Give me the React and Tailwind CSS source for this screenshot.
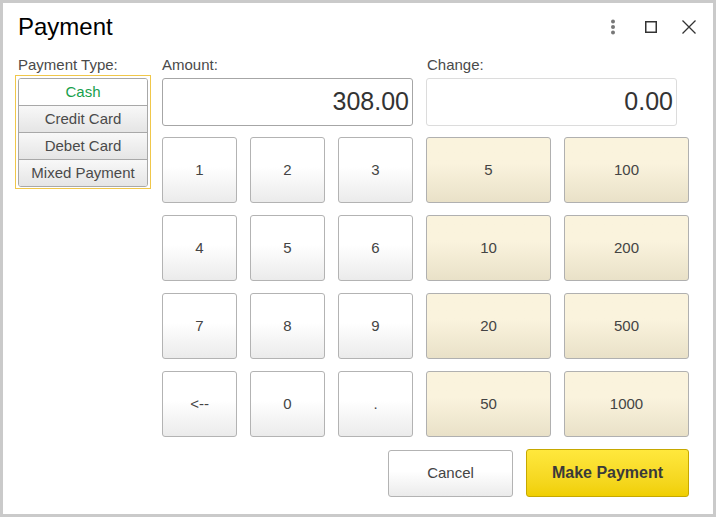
import React from 'react';

const digits = ['1', '2', '3', '4', '5', '6', '7', '8', '9', '<--', '0', '.'];
const bills = ['5', '100', '10', '200', '20', '500', '50', '1000'];
const paymentTypes = ['Cash', 'Credit Card', 'Debet Card', 'Mixed Payment'];

const KeyButton = ({ label }) => (
  <button className="h-[66px] rounded-[3px] border border-[#b3b3b3] bg-linear-to-b from-white from-45% to-[#ebebeb] text-[15px] text-[#444]">
    {label}
  </button>
);

const BillButton = ({ label }) => (
  <button className="h-[66px] rounded-[3px] border border-[#b0b0b0] bg-linear-to-b from-[#faf3dd] from-40% to-[#e9e1c8] text-[15px] text-[#444]">
    {label}
  </button>
);

export default function App() {
  return (
    <div className="w-[716px] h-[517px] border-[3px] border-[#cacaca] bg-white pl-[12px] font-['Liberation_Sans',Arial,sans-serif] overflow-hidden">
      {/* header */}
      <div className="flex items-center pt-[10px] mb-[14px]">
        <h1 className="ml-[3px] text-[24px] leading-[28px] text-black">Payment</h1>
        <div className="ml-auto mr-[16px] flex items-center gap-[22px]">
          <svg width="16" height="16" viewBox="0 0 16 16">
            <circle cx="8" cy="2.5" r="2" fill="#777" />
            <circle cx="8" cy="8" r="2" fill="#777" />
            <circle cx="8" cy="13.5" r="2" fill="#777" />
          </svg>
          <svg width="16" height="16" viewBox="0 0 16 16">
            <rect x="2.75" y="2.75" width="10.5" height="10.5" fill="none" stroke="#333" strokeWidth="1.5" />
          </svg>
          <svg width="16" height="16" viewBox="0 0 16 16">
            <path d="M1.5 1.5 L14.5 14.5 M14.5 1.5 L1.5 14.5" stroke="#333" strokeWidth="1.3" />
          </svg>
        </div>
      </div>

      <div className="flex">
        {/* payment type */}
        <div className="w-[136px]">
          <div className="h-[20px] leading-[20px] ml-[3px] text-[15px] text-[#4a4a4a]">Payment Type:</div>
          <div className="border border-[#f0c74a] p-[2px] pb-[1px]">
            <div className="rounded-[3px] border border-[#a8a8a8] overflow-hidden">
              {paymentTypes.map((t, i) => (
                <div
                  key={t}
                  className={
                    'flex items-center justify-center text-[15px] ' +
                    (i > 0 ? 'h-[27px] border-t border-[#a8a8a8] ' : 'h-[26px] ') +
                    (i === 0
                      ? 'bg-white text-[#17a04c]'
                      : 'bg-linear-to-b from-[#f8f8f8] to-[#e5e5e5] text-[#4a4a4a]')
                  }
                >
                  {t}
                </div>
              ))}
            </div>
          </div>
        </div>

        {/* amount / keypad */}
        <div className="ml-[11px] flex flex-col">
          <div className="flex gap-[13px]">
            <div className="w-[251px]">
              <div className="h-[20px] leading-[20px] text-[15px] text-[#4a4a4a]">Amount:</div>
              <div className="mt-[3px] h-[48px] rounded-[3px] border border-[#a6a6a6] flex items-center justify-end pr-[3px] text-[25px] text-[#333]">
                308.00
              </div>
            </div>
            <div className="w-[251px]">
              <div className="h-[20px] leading-[20px] text-[15px] text-[#4a4a4a] ml-[1px]">Change:</div>
              <div className="mt-[3px] h-[48px] rounded-[3px] border border-[#dcdcdc] flex items-center justify-end pr-[3px] text-[25px] text-[#333]">
                0.00
              </div>
            </div>
          </div>

          <div className="mt-[11px] flex gap-[13px]">
            <div className="grid grid-cols-3 w-[251px] gap-x-[13px] gap-y-[12px]">
              {digits.map((d) => (
                <KeyButton key={d} label={d} />
              ))}
            </div>
            <div className="grid grid-cols-2 w-[263px] gap-x-[13px] gap-y-[12px]">
              {bills.map((b) => (
                <BillButton key={b} label={b} />
              ))}
            </div>
          </div>

          <div className="mt-[12px] flex justify-end items-end gap-[13px]">
            <button className="w-[125px] h-[47px] rounded-[3px] border border-[#b3b3b3] bg-linear-to-b from-white from-45% to-[#ebebeb] text-[15px] text-[#444]">
              Cancel
            </button>
            <button className="w-[163px] h-[48px] rounded-[3px] border border-[#c6a800] bg-linear-to-b from-[#ffe83c] to-[#f0cf00] text-[16px] font-bold text-[#3a3a3a]">
              Make Payment
            </button>
          </div>
        </div>
      </div>
    </div>
  );
}
